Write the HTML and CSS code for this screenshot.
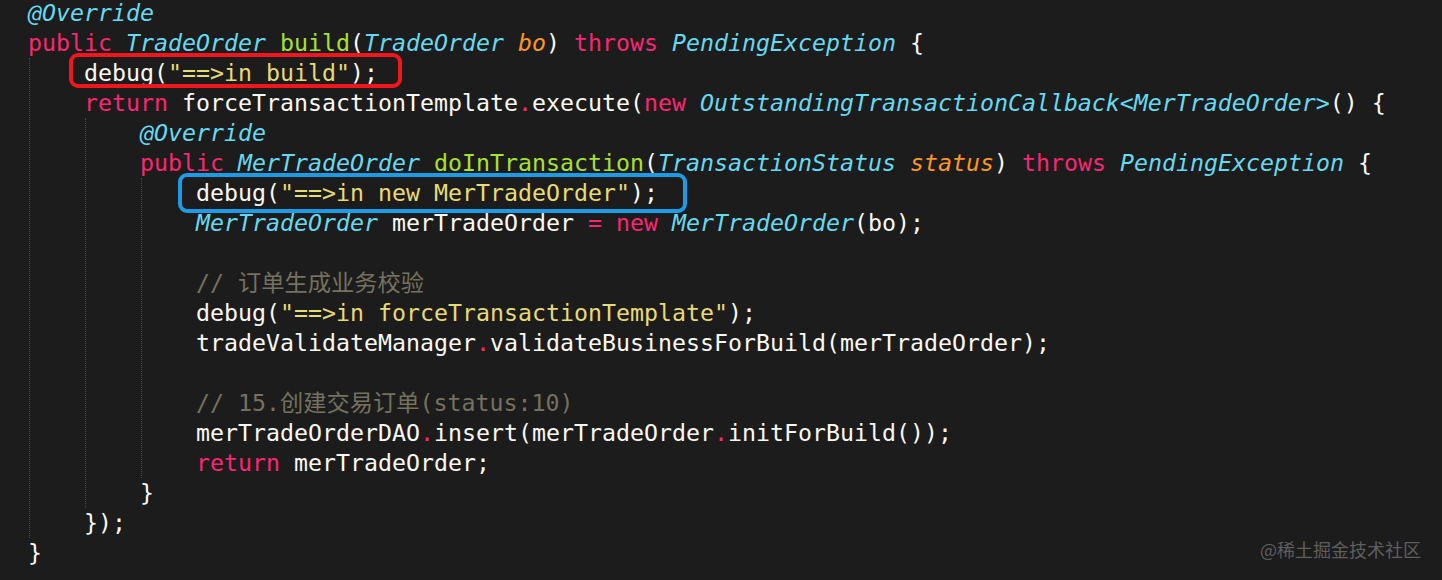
FILE: index.html
```html
<!DOCTYPE html>
<html lang="zh">
<head>
<meta charset="utf-8">
<title>code</title>
<link rel="stylesheet" href="styles.css">
</head>
<body>
<div class="code">
<div class="ln"><span class="ty">@Override</span></div>
<div class="ln"><span class="kw">public</span> <span class="ty">TradeOrder</span> <span class="fn">build</span>(<span class="ty">TradeOrder</span> <span class="pa">bo</span>) <span class="kw">throws</span> <span class="ty">PendingException</span> {</div>
<div class="blk">
<div class="ln"><span class="mark red">debug(<span class="st">"==&gt;in build"</span>);</span></div>
<div class="ln"><span class="kw">return</span> forceTransactionTemplate<span class="kw">.</span>execute(<span class="kw">new</span> <span class="ty">OutstandingTransactionCallback&lt;MerTradeOrder&gt;</span>() {</div>
<div class="blk">
<div class="ln"><span class="ty">@Override</span></div>
<div class="ln"><span class="kw">public</span> <span class="ty">MerTradeOrder</span> <span class="fn">doInTransaction</span>(<span class="ty">TransactionStatus</span> <span class="pa">status</span>) <span class="kw">throws</span> <span class="ty">PendingException</span> {</div>
<div class="blk">
<div class="ln"><span class="mark blue">debug(<span class="st">"==&gt;in new MerTradeOrder"</span>);</span></div>
<div class="ln"><span class="ty">MerTradeOrder</span> merTradeOrder <span class="kw">=</span> <span class="kw">new</span> <span class="ty">MerTradeOrder</span>(bo);</div>
<div class="ln"> </div>
<div class="ln"><span class="cm">// 订单生成业务校验</span></div>
<div class="ln">debug(<span class="st">"==&gt;in forceTransactionTemplate"</span>);</div>
<div class="ln">tradeValidateManager<span class="kw">.</span>validateBusinessForBuild(merTradeOrder);</div>
<div class="ln"> </div>
<div class="ln"><span class="cm">// 15.创建交易订单(status:10)</span></div>
<div class="ln">merTradeOrderDAO<span class="kw">.</span>insert(merTradeOrder<span class="kw">.</span>initForBuild());</div>
<div class="ln"><span class="kw">return</span> merTradeOrder;</div>
</div>
<div class="ln">}</div>
</div>
<div class="ln">});</div>
</div>
<div class="ln">}</div>
</div>
<div class="watermark">@稀土掘金技术社区</div>
</body>
</html>
```

FILE: styles.css
```css
html, body {
  margin: 0;
  padding: 0;
  background: #1c1c1c;
  width: 1442px;
  height: 580px;
  overflow: hidden;
}
body {
  position: relative;
}
.code {
  margin-top: -2px;
  padding-left: 28px;
  font-family: "DejaVu Sans Mono", "Noto Sans CJK SC", monospace;
  font-size: 23.25px;
  line-height: 30px;
  color: #f8f8f2;
}
.ln {
  height: 30px;
  white-space: pre;
}
.blk {
  margin-left: 1px;
  border-left: 1px dotted #474747;
  padding-left: 54px;
}
.kw { color: #f92672; }
.ty { color: #66d9ef; font-style: italic; }
.fn { color: #a6e22e; }
.pa { color: #fd971f; font-style: italic; }
.st { color: #e6db74; }
.cm { color: #75715e; }
.mark {
  position: relative;
}
.mark::after {
  content: "";
  position: absolute;
  border-style: solid;
  border-width: 4px;
  border-radius: 9px;
}
.red::after {
  border-color: #f0161c;
  left: -15px;
  right: -24px;
  top: -6px;
  bottom: -2px;
}
.blue::after {
  border-color: #1c9ce6;
  left: -18px;
  right: -29px;
  top: -6px;
  bottom: -7px;
}
.watermark {
  position: absolute;
  right: 21px;
  bottom: 18px;
  font-family: "Noto Sans CJK SC", sans-serif;
  font-size: 18px;
  line-height: 26px;
  color: #5e5e5e;
}
```
